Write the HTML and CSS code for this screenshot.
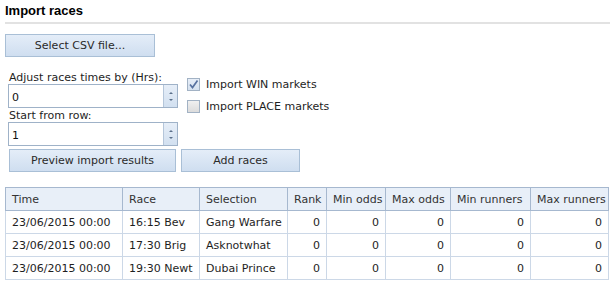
FILE: index.html
```html
<!DOCTYPE html>
<html lang="en">
<head>
    <meta charset="UTF-8">
    <title>Import races</title>
    <link rel="stylesheet" href="styles.css">
</head>
<body>
    <h2 class="title">Import races</h2>

    <button class="btn btn-file">Select CSV file...</button>

    <div class="options">
        <div class="fields">
            <label class="field-label">Adjust races times by (Hrs):</label>
            <div class="spin">
                <input type="text" value="0">
                <span class="spin-btns"><span class="arr up"></span><span class="arr down"></span></span>
            </div>
            <label class="field-label">Start from row:</label>
            <div class="spin">
                <input type="text" value="1">
                <span class="spin-btns"><span class="arr up"></span><span class="arr down"></span></span>
            </div>
        </div>
        <div class="checks">
            <label class="check"><span class="box checked">
                <svg width="11" height="11" viewBox="0 0 11 11"><path d="M2 5.5 L4.5 8.5 L9.5 1.5" fill="none" stroke="#5872a0" stroke-width="1.7"/></svg>
            </span>Import WIN markets</label>
            <label class="check"><span class="box"></span>Import PLACE markets</label>
        </div>
    </div>

    <div class="actions">
        <button class="btn btn-preview">Preview import results</button>
        <button class="btn btn-add">Add races</button>
    </div>

    <table class="grid">
        <colgroup>
            <col style="width:117px"><col style="width:77px"><col style="width:88px"><col style="width:39px">
            <col style="width:59px"><col style="width:65px"><col style="width:80px"><col>
        </colgroup>
        <thead>
            <tr>
                <th>Time</th><th>Race</th><th>Selection</th><th>Rank</th>
                <th>Min odds</th><th>Max odds</th><th>Min runners</th><th>Max runners</th>
            </tr>
        </thead>
        <tbody>
            <tr>
                <td>23/06/2015 00:00</td><td>16:15 Bev</td><td>Gang Warfare</td>
                <td class="num">0</td><td class="num">0</td><td class="num">0</td><td class="num">0</td><td class="num">0</td>
            </tr>
            <tr>
                <td>23/06/2015 00:00</td><td>17:30 Brig</td><td>Asknotwhat</td>
                <td class="num">0</td><td class="num">0</td><td class="num">0</td><td class="num">0</td><td class="num">0</td>
            </tr>
            <tr>
                <td>23/06/2015 00:00</td><td>19:30 Newt</td><td>Dubai Prince</td>
                <td class="num">0</td><td class="num">0</td><td class="num">0</td><td class="num">0</td><td class="num">0</td>
            </tr>
        </tbody>
    </table>
</body>
</html>
```

FILE: styles.css
```css
body {
    margin: 0;
    padding: 0 6px 0 5px;
    font-family: "DejaVu Sans", Verdana, sans-serif;
    font-size: 11px;
    color: #1e1e1e;
    background: #fff;
}
.title {
    margin: 0;
    padding: 3px 0 4px 0;
    font-family: "Liberation Sans", Arial, sans-serif;
    font-size: 13px;
    font-weight: bold;
    color: #000;
    border-bottom: 2px solid #e2e2e2;
}
.btn {
    display: block;
    height: 23px;
    padding: 0;
    font-family: "DejaVu Sans", Verdana, sans-serif;
    font-size: 11px;
    color: #2a2a2a;
    background: linear-gradient(#e4edf8, #cfdef0);
    border: 1px solid #a9bfd6;
    border-radius: 0;
}
.btn-file {
    width: 150px;
    margin-top: 10px;
}
.options {
    display: flex;
    margin-top: 14px;
    padding-left: 3px;
}
.fields {
    width: 170px;
}
.field-label {
    display: block;
    height: 13px;
    line-height: 13px;
    padding-left: 1px;
}
.spin {
    display: flex;
    height: 22px;
    border: 1px solid #9fb2c8;
    margin-bottom: 1px;
}
.spin input {
    flex: 1;
    min-width: 0;
    border: none;
    padding: 2px 0 0 3px;
    font-family: "DejaVu Sans", Verdana, sans-serif;
    font-size: 11px;
    color: #111;
    outline: none;
}
.spin-btns {
    width: 13px;
    border-left: 1px solid #b5c6da;
    background: linear-gradient(#e6eef8, #d2e0f0);
    display: flex;
    flex-direction: column;
    align-items: center;
    justify-content: center;
    gap: 5px;
}
.arr {
    width: 0;
    height: 0;
    border-left: 2px solid transparent;
    border-right: 2px solid transparent;
}
.arr.up {
    border-bottom: 2px solid #5a6f8a;
}
.arr.down {
    border-top: 2px solid #5a6f8a;
}
.checks {
    padding-left: 9px;
    padding-top: 7px;
}
.check {
    display: flex;
    align-items: center;
    height: 13px;
    margin-bottom: 9px;
}
.box {
    width: 11px;
    height: 11px;
    border: 1px solid #a2b2c4;
    background: linear-gradient(#f0f0f0, #dcdcdc);
    margin-right: 6px;
    display: flex;
}
.box.checked {
    background: linear-gradient(#e7eef8, #d5e1ef);
}
.actions {
    display: flex;
    gap: 5px;
    margin-top: 2px;
    padding-left: 4px;
}
.btn-preview {
    width: 167px;
}
.btn-add {
    width: 119px;
}
.grid {
    width: 604px;
    margin-top: 15px;
    border-collapse: collapse;
    table-layout: fixed;
    border: 1px solid #98abc4;
}
.grid th {
    height: 22px;
    padding: 0 6px;
    text-align: left;
    font-weight: 400;
    color: #333;
    background: #e8eff8;
    border: 1px solid #a6b8cf;
    white-space: nowrap;
}
.grid td {
    height: 22px;
    padding: 0 6px;
    border: 1px solid #ccd8e7;
    white-space: nowrap;
    color: #1e1e1e;
}
.grid td.num {
    text-align: right;
}
```
